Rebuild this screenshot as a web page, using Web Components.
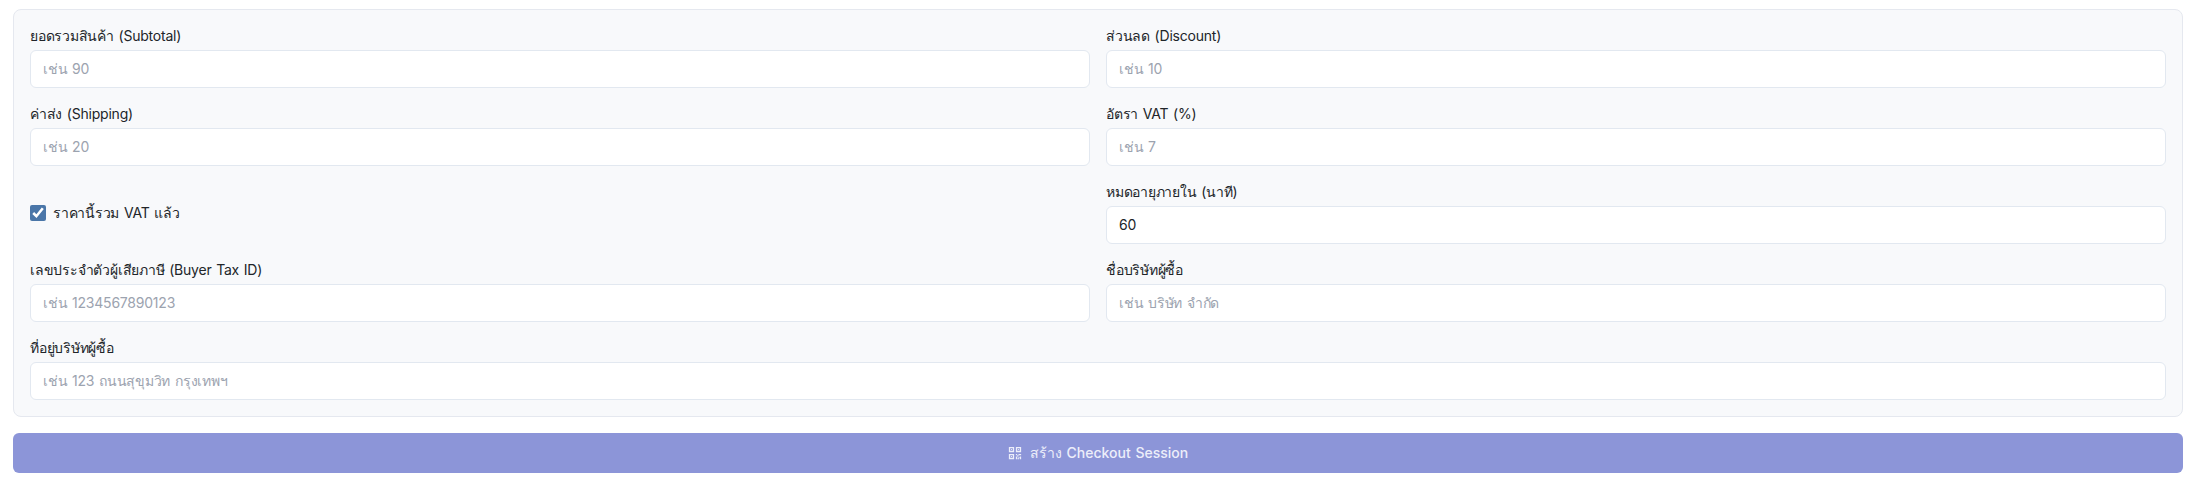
<!DOCTYPE html>
<html lang="th">
<head>
<meta charset="utf-8">
<title>Checkout</title>
<style>
  html, body { margin: 0; background: #fff; }
  body {
    padding: 9px 15px 8px 13px;
    font-family: Inter, "Noto Sans", "Liberation Sans", sans-serif;
    font-size: 14px;
    color: #212529;
    letter-spacing: -0.22px;
    word-spacing: 1px;
  }
  checkout-form { margin-bottom: 16px; }
</style>
</head>
<body>
<checkout-form>
  <form-field label="ยอดรวมสินค้า (Subtotal)" placeholder="เช่น 90"></form-field>
  <form-field label="ส่วนลด (Discount)" placeholder="เช่น 10"></form-field>
  <form-field label="ค่าส่ง (Shipping)" placeholder="เช่น 20"></form-field>
  <form-field label="อัตรา VAT (%)" placeholder="เช่น 7"></form-field>
  <check-field checked>ราคานี้รวม VAT แล้ว</check-field>
  <form-field label="หมดอายุภายใน (นาที)" value="60"></form-field>
  <form-field label="เลขประจำตัวผู้เสียภาษี (Buyer Tax ID)" placeholder="เช่น 1234567890123"></form-field>
  <form-field label="ชื่อบริษัทผู้ซื้อ" placeholder="เช่น บริษัท จำกัด"></form-field>
  <form-field wide label="ที่อยู่บริษัทผู้ซื้อ" placeholder="เช่น 123 ถนนสุขุมวิท กรุงเทพฯ"></form-field>
</checkout-form>
<submit-button>สร้าง Checkout Session</submit-button>

<script>
// panel with the two column grid
var template_form = document.createElement("template");
template_form.innerHTML = `
<style>
  :host {
    display: grid;
    grid-template-columns: 1fr 1fr;
    gap: 16px;
    padding: 16px;
    background: #f8f9fb;
    border: 1px solid #e5e8ef;
    border-radius: 8px;
  }
</style>
<slot></slot>
`;

class CheckoutForm extends HTMLElement {
  constructor() {
    super();
    this.attachShadow({ mode: "open" });
  }
  connectedCallback() {
    this.shadowRoot.appendChild(template_form.content.cloneNode(true));
  }
}
customElements.define("checkout-form", CheckoutForm);

// label + text input
var template_field = document.createElement("template");
template_field.innerHTML = `
<style>
  :host { display: block; min-width: 0; }
  :host([wide]) { grid-column: 1 / -1; }
  label {
    display: block;
    height: 20px;
    line-height: 20px;
    margin-bottom: 4px;
    font-size: 14px;
    color: #212529;
  }
  input {
    display: block;
    box-sizing: border-box;
    width: 100%;
    height: 38px;
    padding: 0 12px 2px;
    background: #fff;
    border: 1px solid #e2e8f0;
    border-radius: 6px;
    font: inherit;
    font-size: 14px;
    letter-spacing: inherit;
    word-spacing: inherit;
    color: #212529;
    outline: none;
  }
  input::placeholder { color: #9ca3af; opacity: 1; }
</style>
<label for="f"></label>
<input id="f" type="text">
`;

class FormField extends HTMLElement {
  constructor() {
    super();
    this.attachShadow({ mode: "open" });
  }
  connectedCallback() {
    this.shadowRoot.appendChild(template_field.content.cloneNode(true));
    this.shadowRoot.querySelector("label").textContent = this.getAttribute("label");
    var input = this.shadowRoot.querySelector("input");
    if (this.getAttribute("placeholder")) input.placeholder = this.getAttribute("placeholder");
    if (this.getAttribute("value")) input.value = this.getAttribute("value");
  }
}
customElements.define("form-field", FormField);

// checkbox row, centred in its grid cell
var template_check = document.createElement("template");
template_check.innerHTML = `
<style>
  :host { display: flex; align-items: center; }
  label { display: flex; align-items: center; gap: 7px; line-height: 20px; }
  input {
    width: 16px;
    height: 16px;
    margin: 0;
    accent-color: #4a76a8;
  }
</style>
<label><input type="checkbox"><span><slot></slot></span></label>
`;

class CheckField extends HTMLElement {
  constructor() {
    super();
    this.attachShadow({ mode: "open" });
  }
  connectedCallback() {
    this.shadowRoot.appendChild(template_check.content.cloneNode(true));
    this.shadowRoot.querySelector("input").checked = this.hasAttribute("checked");
  }
}
customElements.define("check-field", CheckField);

// the big disabled looking button with the qr icon
var template_button = document.createElement("template");
template_button.innerHTML = `
<style>
  :host { display: block; }
  button {
    display: flex;
    align-items: center;
    justify-content: center;
    gap: 8px;
    width: 100%;
    height: 40px;
    padding: 0;
    background: #8c95d8;
    border: 0;
    border-radius: 6px;
    color: #eceefa;
    font: inherit;
    font-size: 14px;
    font-weight: 500;
    letter-spacing: 0;
    word-spacing: inherit;
  }
  svg { width: 14px; height: 14px; fill: currentColor; }
</style>
<button type="button">
  <svg viewBox="0 0 16 16" aria-hidden="true" fill-rule="evenodd">
    <path d="M1 1h6v6H1zM2.500 2.500v3h3v-3zM3.500 3.500h1v1h-1zM9 1h6v6H9zM10.500 2.500v3h3v-3zM11.500 3.500h1v1h-1zM1 9h6v6H1zM2.500 10.500v3h3v-3zM3.500 11.500h1v1h-1z"/>
    <path d="M9 9h1.500v1.500H9zM12 9h3v1.500h-3zM10.500 10.500H12V12h-1.500zM13.500 12H15v3h-1.500zM9 12h1.500v3H9zM12 12.500h1V14h-1zM11 14h1.500v1H11z"/>
  </svg>
  <span><slot></slot></span>
</button>
`;

class SubmitButton extends HTMLElement {
  constructor() {
    super();
    this.attachShadow({ mode: "open" });
  }
  connectedCallback() {
    this.shadowRoot.appendChild(template_button.content.cloneNode(true));
  }
}
customElements.define("submit-button", SubmitButton);
</script>
</body>
</html>
